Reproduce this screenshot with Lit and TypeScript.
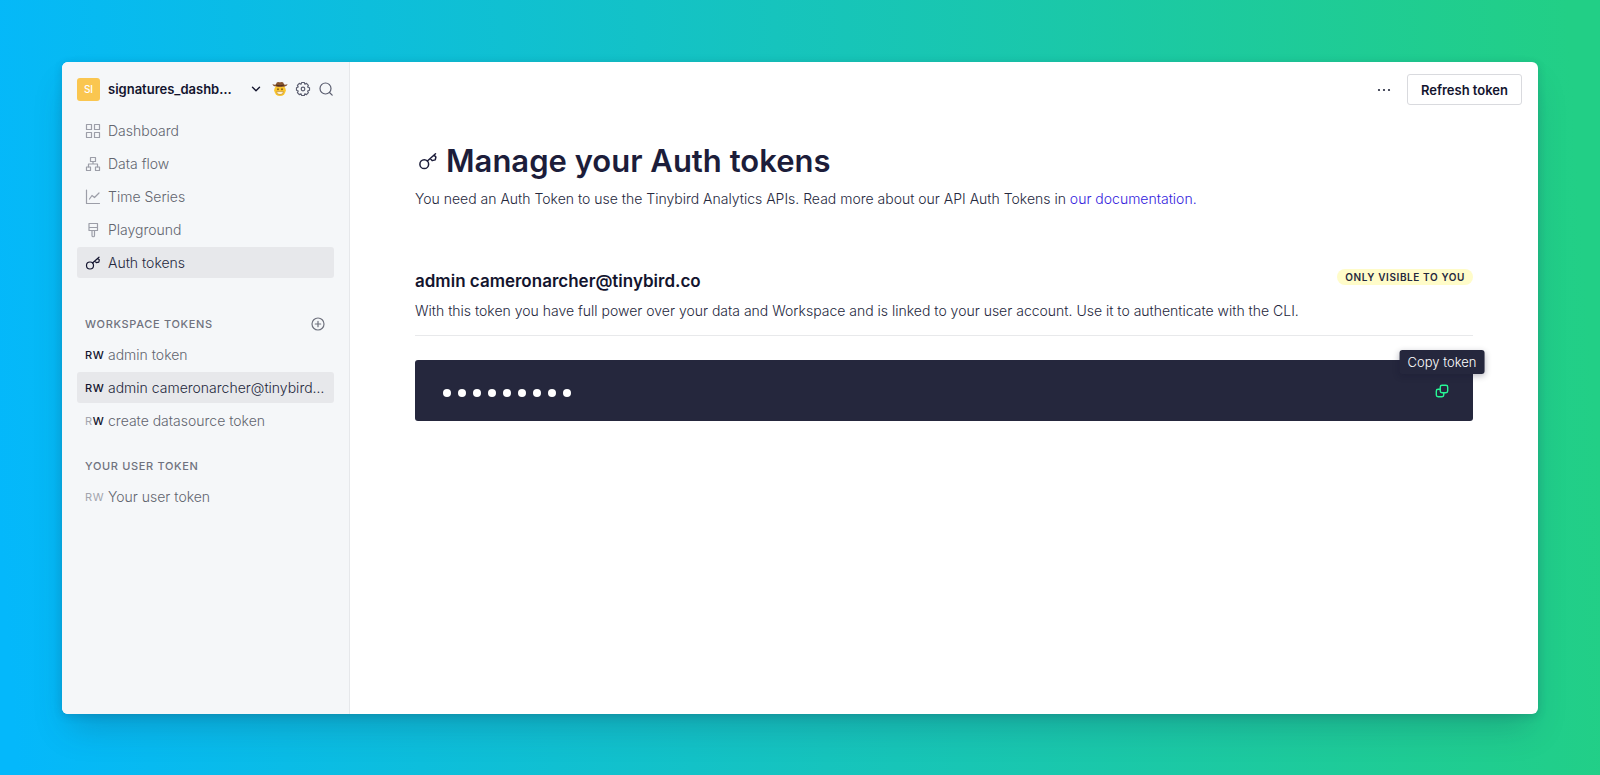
import { LitElement, html, css, svg } from "lit";
import { customElement, property } from "lit/decorators.js";

const icons: Record<string, unknown> = {
  dashboard: svg`<rect x="1.5" y="1.5" width="5" height="5"/><rect x="9.5" y="1.5" width="5" height="5"/><rect x="1.5" y="9.5" width="5" height="5"/><rect x="9.5" y="9.5" width="5" height="5"/>`,
  flow: svg`<rect x="5.5" y="1.5" width="5" height="4"/><rect x="1.5" y="11" width="4" height="3.5"/><rect x="10.5" y="11" width="4" height="3.5"/><path d="M8 5.500v2.500M3.500 11V8h9v3"/>`,
  series: svg`<path d="M1.500 1v13.500h13M4.500 10l2.500-3.500 2.500 2 4.500-4.500"/>`,
  playground: svg`<path d="M4 1.500h8.500v7H4zM4 5.500h8.500M7 8.500h2.500v5a1.250 1.250 0 0 1-2.500 0z"/>`,
  key: svg`<circle cx="5" cy="10.500" r="3.500"/><path d="M7.500 8L14 2.200M9.800 6l1.500 1.700 2.500-.6.500-2.300-1.400-1.500"/>`,
  chevron: svg`<path d="M4.500 6.300l3.500 3.500 3.500-3.500"/>`,
  gear: svg`<path d="M6.700 1.500h2.600l.5 1.700 1.700-.8 1.900 1.900-.8 1.700 1.900.7v2.600l-1.900.7.8 1.700-1.900 1.900-1.700-.8-.5 1.700H6.700l-.7-1.700-1.700.8-1.900-1.900.8-1.700-1.700-.7V6.700l1.700-.7-.8-1.700 1.900-1.900 1.700.8z"/><circle cx="8" cy="8" r="1.800"/>`,
  search: svg`<circle cx="7.500" cy="7.500" r="5.500"/><path d="M11.500 11.500l2.700 2.700"/>`,
  plus: svg`<circle cx="8" cy="8" r="6"/><path d="M8 5.300v5.400M5.300 8h5.400"/>`,
  more: svg`<g fill="currentColor" stroke="none"><circle cx="3" cy="8" r="1.100"/><circle cx="8" cy="8" r="1.100"/><circle cx="13" cy="8" r="1.100"/></g>`,
  copy: svg`<rect x="6" y="1.500" width="8.500" height="8.500" rx="2"/><path d="M6 6H3.500a2 2 0 0 0-2 2v4.500a2 2 0 0 0 2 2H8a2 2 0 0 0 2-2V10"/>`,
};

@customElement("ui-icon")
class UiIcon extends LitElement {
  @property() name = "";
  @property({ type: Number }) size = 16;
  @property({ type: Number }) stroke = 1.2;
  static styles = css`
    :host { display: inline-flex; flex: none; }
    svg { fill: none; stroke: currentColor; stroke-linejoin: round; stroke-linecap: round; }
  `;
  render() {
    return html`<svg width=${this.size} height=${this.size} viewBox="0 0 16 16" stroke-width=${this.stroke} aria-hidden="true">${icons[this.name]}</svg>`;
  }
}

@customElement("cowboy-face")
class CowboyFace extends LitElement {
  static styles = css`:host { display: inline-flex; flex: none; }`;
  render() {
    return html`<svg width="16" height="16" viewBox="0 0 16 16" aria-hidden="true">
      <circle cx="8" cy="9.300" r="5.800" fill="#fbc52d"/>
      <path d="M4.600 10.600h6.800a3.400 3 0 0 1-6.800 0z" fill="#fff5dc" stroke="#a8741c" stroke-width=".5"/>
      <ellipse cx="6" cy="8.300" rx=".7" ry="1" fill="#5b3a12"/><ellipse cx="10" cy="8.300" rx=".7" ry="1" fill="#5b3a12"/>
      <path d="M.5 3c1 .7 2.500.8 3.500.5C4.300 1.800 5 1 6.200 1 7 1 7.300 1.300 8 1.300S9 1 9.800 1c1.200 0 1.900.8 2.200 2.500 1 .3 2.500.2 3.500-.5-.4 2.200-3 3-7.500 3S.9 5.200.5 3z" fill="#85532f"/>
      <path d="M4 3.600c2.500.8 5.500.8 8 0v.9c-2.500.8-5.500.8-8 0z" fill="#4e2d1c"/>
    </svg>`;
  }
}

interface Token { name: string; read: boolean; write: boolean; active?: boolean }

@customElement("app-root")
class AppRoot extends LitElement {
  private nav = [
    { icon: "dashboard", label: "Dashboard" },
    { icon: "flow", label: "Data flow" },
    { icon: "series", label: "Time Series" },
    { icon: "playground", label: "Playground" },
    { icon: "key", label: "Auth tokens", active: true },
  ];
  private workspaceTokens: Token[] = [
    { name: "admin token", read: true, write: true },
    { name: "admin cameronarcher@tinybird…", read: true, write: true, active: true },
    { name: "create datasource token", read: false, write: true },
  ];
  private userTokens: Token[] = [{ name: "Your user token", read: false, write: false }];

  static styles = css`
    :host {
      display: flex; box-sizing: border-box; min-height: 100vh; padding: 62px 62px 61px;
      background: linear-gradient(86deg, #04b8fb 1%, #16c4bd 50%, #22cf86 98%);
      font-family: Inter, "Liberation Sans", sans-serif; font-size: 14px; line-height: 20px; font-weight: 300; color: #25283d;
    }
    * { box-sizing: border-box; }
    h1, h2, h3, p, ul { margin: 0; padding: 0; }
    ul { list-style: none; display: flex; flex-direction: column; gap: 2px; }
    button { font: inherit; color: inherit; background: none; border: 0; padding: 0; display: inline-flex; align-items: center; }
    a { text-decoration: none; }
    .window { flex: 1; min-width: 0; display: flex; border-radius: 6px; background: #fff; box-shadow: 0 20px 32px -8px rgba(20, 60, 90, .26), 0 2px 8px rgba(20, 60, 90, .2); }
    .sidebar { flex: none; width: 288px; padding: 15px; background: #f5f7f9; border-right: 1px solid #e6e8eb; border-radius: 6px 0 0 6px; }
    .workspace { display: flex; align-items: center; gap: 8px; height: 24px; margin-bottom: 14px; color: #5b5e70; }
    .avatar { flex: none; width: 23px; height: 23px; border-radius: 3px; background: #fac650; color: #fff; font-size: 10px; font-weight: 500; display: grid; place-items: center; }
    .wsname { flex: 1; min-width: 0; font-size: 13px; font-weight: 600; color: #13142e; justify-content: space-between; }
    .actions { display: flex; gap: 7px; }
    .chevron { color: #13142e; }
    .row { display: flex; align-items: center; height: 31px; padding: 0 8px; border-radius: 3px; color: #62656f; }
    .row ui-icon { width: 23px; color: #9c9ea8; }
    .row.active { background: #e7e8eb; color: #25283d; }
    .row.active ui-icon { color: #13142e; }
    .label { min-width: 0; overflow: hidden; text-overflow: ellipsis; white-space: nowrap; }
    .scope { flex: none; width: 23px; font-size: 11px; font-weight: 400; letter-spacing: .06em; color: #a3a5ae; }
    .on { color: #13142e; font-weight: 500; }
    .group { display: flex; align-items: center; justify-content: space-between; height: 30px; padding: 0 8px; color: #6f727e; }
    .group h3 { font-size: 11px; font-weight: 500; letter-spacing: .06em; text-transform: uppercase; }
    .workspace-group { margin-top: 31px; }
    .user-group { margin-top: 15px; }
    .main { flex: 1; min-width: 0; }
    .toolbar { display: flex; justify-content: flex-end; align-items: center; gap: 15px; padding: 12px 16px 0; }
    .refresh { height: 31px; padding: 0 13px; border: 1px solid #d9dade; border-radius: 3px; font-size: 13px; font-weight: 600; color: #13142e; }
    .content { padding: 36px 65px; }
    .title { display: flex; align-items: center; gap: 8px; height: 40px; padding-left: 3px; font-size: 31px; line-height: 40px; font-weight: 600; color: #1c1d3a; }
    .intro { margin-top: 8px; }
    .intro a { color: #3322dd; }
    .token { margin-top: 60px; padding-bottom: 14px; border-bottom: 1px solid #e8e9eb; }
    .heading { display: flex; justify-content: space-between; align-items: flex-start; }
    .heading h2 { font-size: 17px; line-height: 25px; font-weight: 600; color: #13142e; }
    .badge { height: 16px; padding: 0 8px; border-radius: 8px; background: #fffcc9; font-size: 10px; line-height: 16px; font-weight: 600; letter-spacing: .06em; text-transform: uppercase; }
    .desc { margin-top: 7px; }
    .secret { display: flex; align-items: center; justify-content: space-between; height: 61px; margin-top: 24px; padding: 0 24px 0 28px; border-radius: 3px; background: #25273d; color: #fff; }
    .dots { display: flex; gap: 7px; padding-top: 4px; }
    .dot { width: 8px; height: 8px; border-radius: 50%; background: #fff; }
    .copy { position: relative; color: #27f795; }
    .tip { position: absolute; left: 50%; bottom: 100%; transform: translateX(-50%); margin-bottom: 10px; height: 24px; padding: 0 8px; border-radius: 3px; background: #25273d; color: #fff; font-size: 13px; line-height: 24px; white-space: nowrap; box-shadow: 0 2px 6px rgba(19, 20, 46, .3); }
  `;

  private tokenRow(t: Token) {
    return html`<li><a href="#" class="row ${t.active ? "active" : ""}">
      <span class="scope"><span class=${t.read ? "on" : ""}>R</span><span class=${t.write ? "on" : ""}>W</span></span><span class="label">${t.name}</span>
    </a></li>`;
  }

  render() {
    return html`<div class="window">
      <aside class="sidebar">
        <div class="workspace">
          <span class="avatar">SI</span>
          <button class="wsname"><span class="label">signatures_dashb…</span><ui-icon class="chevron" name="chevron" stroke="1.4"></ui-icon></button>
          <div class="actions">
            <button aria-label="Profile"><cowboy-face></cowboy-face></button>
            <button aria-label="Settings"><ui-icon name="gear"></ui-icon></button>
            <button aria-label="Search"><ui-icon name="search"></ui-icon></button>
          </div>
        </div>
        <nav><ul>
          ${this.nav.map((n) => html`<li><a href="#" class="row ${n.active ? "active" : ""}"><ui-icon name=${n.icon}></ui-icon><span class="label">${n.label}</span></a></li>`)}
        </ul></nav>
        <div class="group workspace-group"><h3>Workspace tokens</h3><button aria-label="Add token"><ui-icon name="plus"></ui-icon></button></div>
        <ul>${this.workspaceTokens.map((t) => this.tokenRow(t))}</ul>
        <div class="group user-group"><h3>Your user token</h3></div>
        <ul>${this.userTokens.map((t) => this.tokenRow(t))}</ul>
      </aside>
      <main class="main">
        <div class="toolbar">
          <button aria-label="More options"><ui-icon name="more"></ui-icon></button>
          <button class="refresh">Refresh token</button>
        </div>
        <div class="content">
          <h1 class="title"><ui-icon name="key" size="20"></ui-icon>Manage your Auth tokens</h1>
          <p class="intro">You need an Auth Token to use the Tinybird Analytics APIs. Read more about our API Auth Tokens in <a href="#">our documentation.</a></p>
          <section class="token">
            <div class="heading"><h2>admin cameronarcher@tinybird.co</h2><span class="badge">Only visible to you</span></div>
            <p class="desc">With this token you have full power over your data and Workspace and is linked to your user account. Use it to authenticate with the CLI.</p>
          </section>
          <div class="secret">
            <div class="dots" role="img" aria-label="Hidden token">${Array.from({ length: 9 }, () => html`<span class="dot"></span>`)}</div>
            <button class="copy" aria-label="Copy token"><ui-icon name="copy" size="14" stroke="1.6"></ui-icon><span class="tip" role="tooltip">Copy token</span></button>
          </div>
        </div>
      </main>
    </div>`;
  }
}
